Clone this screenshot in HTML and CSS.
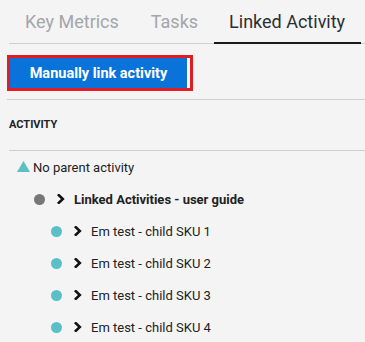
FILE: index.html
```html
<!DOCTYPE html>
<html>
<head>
<meta charset="utf-8">
<link rel="stylesheet" href="styles.css">
</head>
<body>
<div class="panel">
  <nav class="tabs">
    <div class="tab">Key Metrics</div>
    <div class="tab">Tasks</div>
    <div class="tab active">Linked Activity</div>
  </nav>
  <div class="toolbar">
    <div class="highlight">
      <button class="btn-primary">Manually link activity</button>
    </div>
  </div>
  <div class="section-title">ACTIVITY</div>
  <ul class="tree">
    <li class="row level-0">
      <svg class="tri" width="13" height="11" viewBox="0 0 13 11"><polygon points="6.5,0 13,11 0,11" fill="#5cbfc6"/></svg>
      <span class="label">No parent activity</span>
    </li>
    <li class="row level-1">
      <span class="dot gray"></span>
      <svg class="chev" width="8" height="10" viewBox="0 0 8 10"><polyline points="1.8,1.2 5.8,5 1.8,8.8" fill="none" stroke="#111" stroke-width="2.6" stroke-linecap="square"/></svg>
      <span class="label strong">Linked Activities - user guide</span>
    </li>
    <li class="row level-2">
      <span class="dot teal"></span>
      <svg class="chev" width="8" height="10" viewBox="0 0 8 10"><polyline points="1.8,1.2 5.8,5 1.8,8.8" fill="none" stroke="#111" stroke-width="2.6" stroke-linecap="square"/></svg>
      <span class="label">Em test - child SKU 1</span>
    </li>
    <li class="row level-2">
      <span class="dot teal"></span>
      <svg class="chev" width="8" height="10" viewBox="0 0 8 10"><polyline points="1.8,1.2 5.8,5 1.8,8.8" fill="none" stroke="#111" stroke-width="2.6" stroke-linecap="square"/></svg>
      <span class="label">Em test - child SKU 2</span>
    </li>
    <li class="row level-2">
      <span class="dot teal"></span>
      <svg class="chev" width="8" height="10" viewBox="0 0 8 10"><polyline points="1.8,1.2 5.8,5 1.8,8.8" fill="none" stroke="#111" stroke-width="2.6" stroke-linecap="square"/></svg>
      <span class="label">Em test - child SKU 3</span>
    </li>
    <li class="row level-2">
      <span class="dot teal"></span>
      <svg class="chev" width="8" height="10" viewBox="0 0 8 10"><polyline points="1.8,1.2 5.8,5 1.8,8.8" fill="none" stroke="#111" stroke-width="2.6" stroke-linecap="square"/></svg>
      <span class="label">Em test - child SKU 4</span>
    </li>
  </ul>
</div>
</body>
</html>
```
FILE: styles.css
```css
html, body {
  margin: 0;
  padding: 0;
  background: #f4f4f4;
}
body {
  font-family: Roboto, "Liberation Sans", Arial, sans-serif;
  color: #222;
  overflow: hidden;
}
.panel {
  margin-left: 9px;
}
.tabs {
  display: flex;
  border-bottom: 1px solid #cfcfcf;
}
.tab {
  padding: 11px 16px 11px 16px;
  font-size: 18px;
  line-height: 21px;
  color: #a3a6aa;
  white-space: nowrap;
}
.tab.active {
  color: #2b2f33;
  border-bottom: 2px solid #1a1a1a;
  margin-bottom: -1px;
  padding-bottom: 10px;
  padding-left: 15px;
}
.toolbar {
  display: flex;
  padding: 11px 0 8px 0;
  margin-left: -2px;
  border-bottom: 1px solid #cfcfcf;
}
.highlight {
  display: flex;
  border: 3px solid #e21c24;
  background: #ffffff;
  padding-right: 3px;
}
.btn-primary {
  display: block;
  width: 177px;
  height: 30px;
  margin: 0;
  border: 0;
  background: #0a73da;
  color: #fff;
  font-family: Roboto, "Liberation Sans", Arial, sans-serif;
  font-weight: 700;
  font-size: 14.5px;
  padding: 0;
}
.section-title {
  font-size: 11px;
  font-weight: 700;
  color: #222;
  line-height: 13px;
  padding: 18px 0 19px 0;
  border-bottom: 1px solid #cfcfcf;
}
.tree {
  list-style: none;
  margin: 0;
  padding: 0;
}
.row {
  display: flex;
  align-items: center;
  height: 32px;
  font-size: 13px;
  color: #222;
  white-space: nowrap;
}
.level-0 { padding-left: 8px; }
.level-1 { padding-left: 25px; }
.level-2 { padding-left: 42px; }
.tri {
  display: block;
  margin-right: 3px;
  margin-top: -1px;
}
.dot {
  width: 11px;
  height: 11px;
  border-radius: 50%;
  flex: none;
  margin-right: 12px;
}
.dot.gray { background: #777777; }
.dot.teal { background: #5cbfc6; }
.chev {
  display: block;
  flex: none;
  margin-right: 9px;
}
.label.strong {
  font-weight: 700;
}
```
